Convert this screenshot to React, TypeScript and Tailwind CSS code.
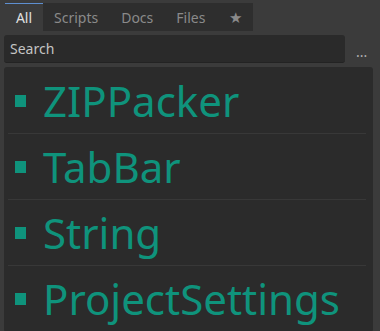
const items = ['ZIPPacker', 'TabBar', 'String', 'ProjectSettings'];

const tabs = ['Scripts', 'Docs', 'Files'];

export default function App() {
  return (
    <div
      className="h-[331px] w-[380px] overflow-hidden bg-[#3b3b3b] text-[14px]"
      style={{ fontFamily: '"Noto Sans", sans-serif' }}
    >
      {/* Tab bar */}
      <div className="flex h-[31px] pt-[3px] pl-[5px]">
        <div className="flex w-[38px] items-center justify-center border-t-[1.5px] border-[#5e8fd0] text-[#e0e0e0]">
          All
        </div>
        <div className="flex w-[210px] items-center bg-[#2e2e2e] text-[#8a8a8a]">
          {tabs.map((t) => (
            <div key={t} className="px-[11px] pr-[12px]">
              {t}
            </div>
          ))}
          <div className="ml-[12px] text-[15px]">★</div>
        </div>
      </div>

      {/* Search */}
      <div className="mt-[4px] flex items-center pl-[4px]">
        <div className="flex h-[28px] w-[341px] items-center rounded-[3px] border-b border-[#232323] bg-[#2a2a2a] px-[6px] text-[#c4c4c4]">
          Search
        </div>
        <div className="ml-[11px] mt-[6px] text-[#b0b0b0] leading-none">...</div>
      </div>

      {/* Results */}
      <div className="ml-[4px] mt-[4px] w-[369px] rounded-[3px] bg-[#2b2b2b] pt-[1px]">
        {items.map((name) => (
          <div key={name} className="ml-[4px] mr-[7px] flex h-[66px] items-center border-b border-[#383838]">
            <div className="ml-[7px] h-[12px] w-[11px] bg-[#0f937c]" />
            <div className="ml-[17px] text-[42px] text-[#0f937c] leading-none">{name}</div>
          </div>
        ))}
      </div>
    </div>
  );
}
